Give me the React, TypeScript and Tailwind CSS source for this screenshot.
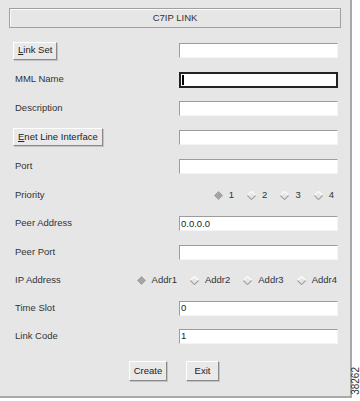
import React from 'react';

const Diamond = ({ on }: { on?: boolean }) => (
  <svg width="9" height="9" viewBox="0 0 10 10" className="shrink-0">
    {on ? (
      <polygon points="5,0.5 9.5,5 5,9.5 0.5,5" fill="#a4a4a4" stroke="#8a8a8a" strokeWidth="0.6" />
    ) : (
      <>
        <polyline points="0.5,5 5,0.5 9.5,5" fill="none" stroke="#ffffff" strokeWidth="1.2" />
        <polyline points="0.5,5 5,9.5 9.5,5" fill="none" stroke="#a0a0a0" strokeWidth="1.2" />
      </>
    )}
  </svg>
);

const Field = ({ value, focused }: { value?: string; focused?: boolean }) =>
  focused ? (
    <div className="w-[159px] h-[16px] bg-white border-2 border-[#222] flex items-center pl-[1px]">
      <div className="w-[2px] h-[10px] bg-black" />
    </div>
  ) : (
    <div className="w-[159px] h-[15px] bg-white border border-t-[#9c9c9c] border-l-[#9c9c9c] border-b-[#f4f4f4] border-r-[#f4f4f4] flex items-center pl-[1px] text-[9.5px] text-[#222] leading-none">
      {value}
    </div>
  );

const Btn = ({ u, rest }: { u: string; rest: string }) => (
  <div className="h-[18px] px-[4px] flex items-center bg-[#e9e9e9] border border-t-white border-l-white border-b-[#8a8a8a] border-r-[#8a8a8a] shadow-[1px_1px_0_#c4c4c4] text-[9.5px] text-[#222]">
    <span className="underline">{u}</span>
    {rest}
  </div>
);

export default function App() {
  const rows: { label: React.ReactNode; right: React.ReactNode; h: string }[] = [
    { label: <Btn u="L" rest="ink Set" />, right: <Field />, h: 'h-[29px]' },
    { label: 'MML Name', right: <Field focused />, h: 'h-[29px]' },
    { label: 'Description', right: <Field />, h: 'h-[28px]' },
    { label: <Btn u="E" rest="net Line Interface" />, right: <Field />, h: 'h-[30px]' },
    { label: 'Port', right: <Field />, h: 'h-[29px]' },
    {
      label: 'Priority',
      right: (
        <div className="flex items-center justify-end w-[159px] gap-[13px] text-[9.5px] text-[#333] pr-[4px]">
          {['1', '2', '3', '4'].map((n, i) => (
            <span key={n} className="flex items-center gap-[6px]">
              <Diamond on={i === 0} />
              {n}
            </span>
          ))}
        </div>
      ),
      h: 'h-[28px]',
    },
    { label: 'Peer Address', right: <Field value="0.0.0.0" />, h: 'h-[29px]' },
    { label: 'Peer Port', right: <Field />, h: 'h-[28px]' },
    {
      label: 'IP Address',
      right: (
        <div className="flex items-center justify-end w-[205px] gap-[13px] text-[9.5px] text-[#333] -ml-[46px] pr-[1px]">
          {['Addr1', 'Addr2', 'Addr3', 'Addr4'].map((n, i) => (
            <span key={n} className="flex items-center gap-[6px]">
              <Diamond on={i === 0} />
              {n}
            </span>
          ))}
        </div>
      ),
      h: 'h-[28px]',
    },
    { label: 'Time Slot', right: <Field value="0" />, h: 'h-[28px]' },
    { label: 'Link Code', right: <Field value="1" />, h: 'h-[28px]' },
  ];

  return (
    <div className="w-[360px] h-[401px] bg-white flex" style={{ fontFamily: '"Liberation Sans", Arial, sans-serif' }}>
      <div className="w-[352px] shrink-0 h-[398px] bg-[#e6e6e6] border-r-2 border-b-2 border-[#a8a8a8] flex flex-col">
        <div className="mt-[8px] mx-[9px] h-[20px] border border-[#a0a0a0] shadow-[inset_1px_1px_0_#fafafa] flex items-center justify-center text-[9.5px] text-[#333]">
          C7IP LINK
        </div>
        <div className="mt-[8px] flex flex-col">
          {rows.map((r, i) => (
            <div key={i} className={`${r.h} flex items-center justify-between pl-[13px] pr-[12px] text-[9.5px] text-[#333]`}>
              <div className={typeof r.label === 'string' ? 'pl-[2px]' : ''}>{r.label}</div>
              {r.right}
            </div>
          ))}
        </div>
        <div className="mt-[11px] flex justify-center gap-[19px] pr-[2px]">
          <div className="w-[38px] h-[20px] flex items-center justify-center bg-[#e9e9e9] border border-t-white border-l-white border-b-[#8a8a8a] border-r-[#8a8a8a] shadow-[1px_1px_0_#c4c4c4] text-[9.5px] text-[#222]">
            Create
          </div>
          <div className="w-[33px] h-[20px] flex items-center justify-center bg-[#e9e9e9] border border-t-white border-l-white border-b-[#8a8a8a] border-r-[#8a8a8a] shadow-[1px_1px_0_#c4c4c4] text-[9.5px] text-[#222]">
            Exit
          </div>
        </div>
      </div>
      <div className="w-[8px] shrink-0 flex items-end justify-center pb-[6px] overflow-visible">
        <span className="text-[10px] text-[#333] [writing-mode:vertical-rl] rotate-180 leading-none">38262</span>
      </div>
    </div>
  );
}
